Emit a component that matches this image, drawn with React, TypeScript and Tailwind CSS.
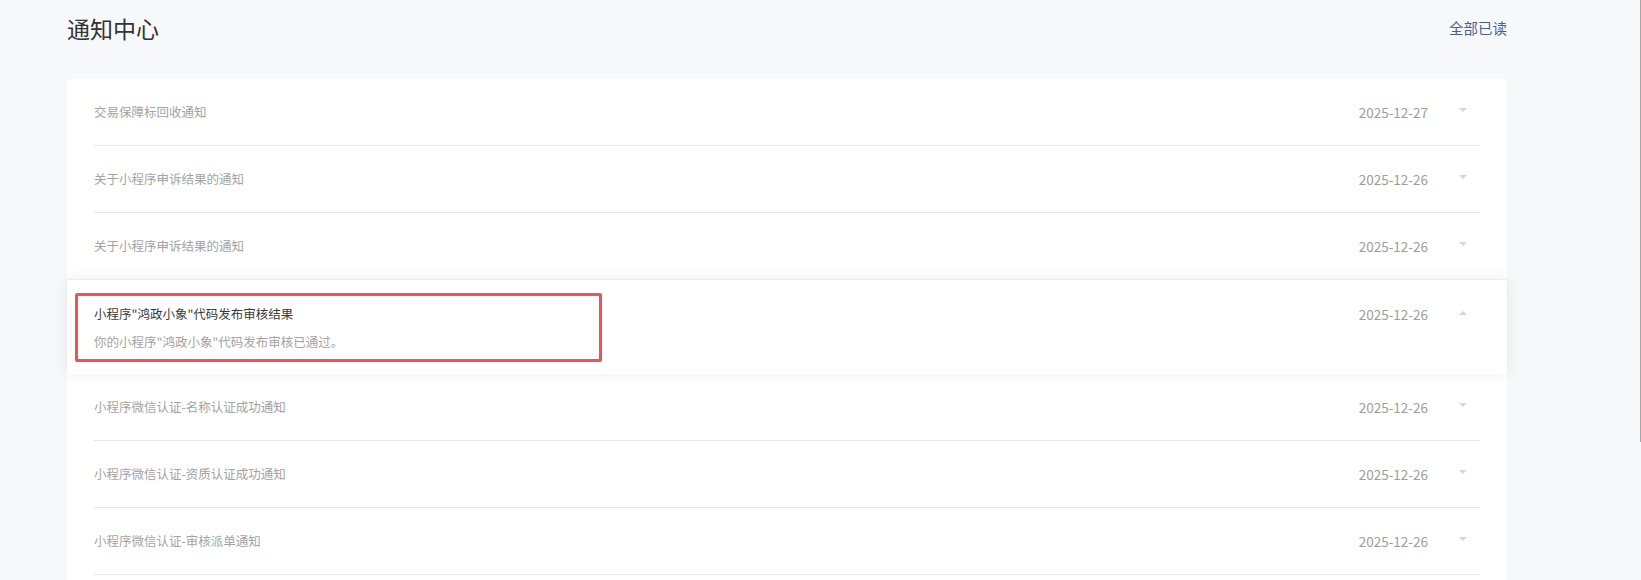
import React from "react";

const rows = [
  { title: "交易保障标回收通知", date: "2025-12-27" },
  { title: "关于小程序申诉结果的通知", date: "2025-12-26" },
  { title: "关于小程序申诉结果的通知", date: "2025-12-26" },
  {
    title: "小程序\"鸿政小象\"代码发布审核结果",
    date: "2025-12-26",
    body: "你的小程序\"鸿政小象\"代码发布审核已通过。",
    open: true,
  },
  { title: "小程序微信认证-名称认证成功通知", date: "2025-12-26" },
  { title: "小程序微信认证-资质认证成功通知", date: "2025-12-26" },
  { title: "小程序微信认证-审核派单通知", date: "2025-12-26" },
];

function Caret({ up }: { up?: boolean }) {
  return (
    <svg width="8" height="4" viewBox="0 0 8 4" className="block">
      {up ? (
        <path d="M0 4 L4 0 L8 4 Z" fill="#d6d6d6" />
      ) : (
        <path d="M0 0 L8 0 L4 4 Z" fill="#d6d6d6" />
      )}
    </svg>
  );
}

export default function App() {
  return (
    <div
      className="relative h-[580px] overflow-hidden bg-[#f7f8fa]"
      style={{ fontFamily: '"Noto Sans CJK SC", "Noto Sans", sans-serif' }}
    >
      <div className="ml-[67px] w-[1440px]">
        <div className="flex h-[56px] items-center justify-between">
          <h1 className="text-[23px] font-normal leading-none text-[#333]">通知中心</h1>
          <span className="text-[14.5px] leading-none text-[#4a5e93]">全部已读</span>
        </div>
        <div className="mt-[23px] rounded-[4px] bg-white pb-[40px]">
          {rows.map((r, i) =>
            r.open ? (
              <div
                key={i}
                className="relative z-10 -mt-px flex h-[95px] border-t border-[#ececec] bg-white px-[27px] pt-[25px] shadow-[0_0_14px_rgba(0,0,0,0.08)]"
              >
                <div className="flex-1">
                  <div className="text-[12.5px] leading-[18px] text-[#3a3a3a]">{r.title}</div>
                  <div className="mt-[10px] text-[12.5px] leading-[18px] text-[#a3a3a3]">{r.body}</div>
                </div>
                <div className="flex h-[18px] items-center">
                  <span className="text-[13.5px] leading-[18px] text-[#9d9d9d]">{r.date}</span>
                  <div className="ml-[31px] mr-[13px] -mt-[3px]">
                    <Caret up />
                  </div>
                </div>
                <div className="absolute left-[8px] top-[13px] h-[69px] w-[527px] rounded-[2px] border-[3px] border-[#f25252]" />
              </div>
            ) : (
              <div key={i} className="px-[27px]">
                <div className="flex h-[67px] items-center border-b border-[#e6e6e6]">
                  <span className="flex-1 text-[12.5px] text-[#a3a3a3]">{r.title}</span>
                  <span className="text-[13.5px] text-[#9d9d9d]">{r.date}</span>
                  <div className="ml-[31px] mr-[13px] -mt-[5px]">
                    <Caret />
                  </div>
                </div>
              </div>
            )
          )}
        </div>
      </div>
      <div className="absolute right-0 top-0 h-[442px] w-px bg-[#a6a6a6]" />
    </div>
  );
}
